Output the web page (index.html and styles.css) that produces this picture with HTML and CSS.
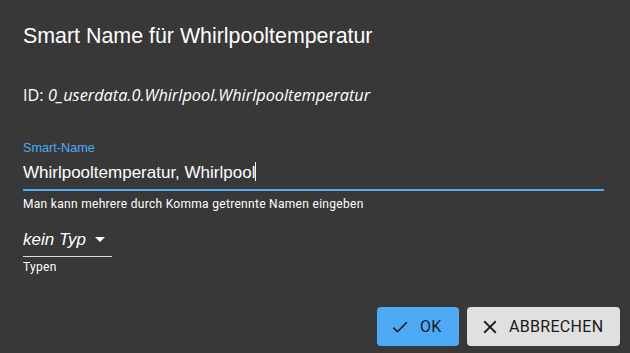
FILE: index.html
```html
<!DOCTYPE html>
<html lang="de">
<head>
  <meta charset="UTF-8">
  <title>Smart Name</title>
  <link rel="stylesheet" href="styles.css">
</head>
<body>

<div class="dialog">
  <h2 class="dialog-title">Smart Name für Whirlpooltemperatur</h2>

  <div class="dialog-content">
    <p class="object-id">ID: <i>0_userdata.0.Whirlpool.Whirlpooltemperatur</i></p>

    <div class="field">
      <label class="field-label">Smart-Name</label>
      <div class="field-input">Whirlpooltemperatur, Whirlpool<span class="caret"></span></div>
      <div class="field-help">Man kann mehrere durch Komma getrennte Namen eingeben</div>
    </div>

    <div class="select">
      <div class="select-value">kein Typ
        <svg class="select-arrow" width="10" height="5" viewBox="0 0 10 5"><path d="M0 0h10L5 5z" fill="#fff"/></svg>
      </div>
      <div class="field-help">Typen</div>
    </div>
  </div>

  <div class="dialog-actions">
    <button class="btn btn-primary">
      <svg width="20" height="20" viewBox="0 0 24 24"><path d="M9 16.17 4.83 12l-1.42 1.41L9 19 21 7l-1.41-1.41z" fill="currentColor"/></svg>
      OK
    </button>
    <button class="btn btn-default">
      <svg width="22" height="22" viewBox="0 0 24 24"><path d="M19 6.41 17.59 5 12 10.59 6.41 5 5 6.41 10.59 12 5 17.59 6.41 19 12 13.41 17.59 19 19 17.59 13.41 12z" fill="currentColor"/></svg>
      ABBRECHEN
    </button>
  </div>
</div>

</body>
</html>
```

FILE: styles.css
```css
/* General Styling */
body {
  margin: 0;
  background: #383838;
  color: #fff;
  font-family: 'Liberation Sans', Arial, sans-serif;
}
.dialog {
  width: 630px;
  height: 353px;
  display: flex;
  flex-direction: column;
  box-sizing: border-box;
}
.dialog-title {
  margin: 0;
  padding: 24px 23px 0;
  font-size: 21.4px;
  font-weight: normal;
  line-height: 24px;
}
.dialog-content {
  flex: 1;
  padding: 0 26px 0 23px;
}
.object-id {
  margin: 37px 0 0;
  font-family: 'Open Sans', sans-serif;
  font-size: 16.3px;
  line-height: 20px;
}
/* Text field */
.field {
  margin-top: 36px;
}
.field-label {
  display: block;
  color: #4dabf5;
  font-size: 12.7px;
  line-height: 14px;
}
.field-input {
  font-size: 17px;
  line-height: 22px;
  padding: 7px 0 5px;
  border-bottom: 2px solid #4dabf5;
}
.caret {
  display: inline-block;
  width: 1px;
  height: 19px;
  background: #fff;
  vertical-align: -3px;
}
.field-help {
  margin-top: 6px;
  font-family: 'Roboto', sans-serif;
  font-size: 12px;
  line-height: 14px;
  letter-spacing: 0.3px;
}
/* Select */
.select {
  margin-top: 16px;
}
.select-value {
  display: inline-block;
  width: 89px;
  font-size: 17px;
  font-style: italic;
  line-height: 22px;
  padding: 2px 0 5px;
  border-bottom: 1px solid #ddd;
}
.select-arrow {
  margin-left: 4px;
  vertical-align: 3px;
}
.select .field-help {
  margin-top: 3px;
}
/* Buttons */
.dialog-actions {
  display: flex;
  justify-content: flex-end;
  gap: 8px;
  padding: 0 10px 7px;
}
.btn {
  display: flex;
  align-items: center;
  height: 39px;
  border: none;
  border-radius: 4px;
  font-family: 'Roboto', sans-serif;
  font-size: 16px;
  letter-spacing: 0.3px;
  color: #1a1a1a;
}
.btn-primary {
  background: #4dabf5;
  width: 82px;
  gap: 10px;
  padding: 0 0 0 13px;
}
.btn-default {
  background: #e0e0e0;
  width: 153px;
  gap: 8px;
  padding: 0 0 0 12px;
}
```
